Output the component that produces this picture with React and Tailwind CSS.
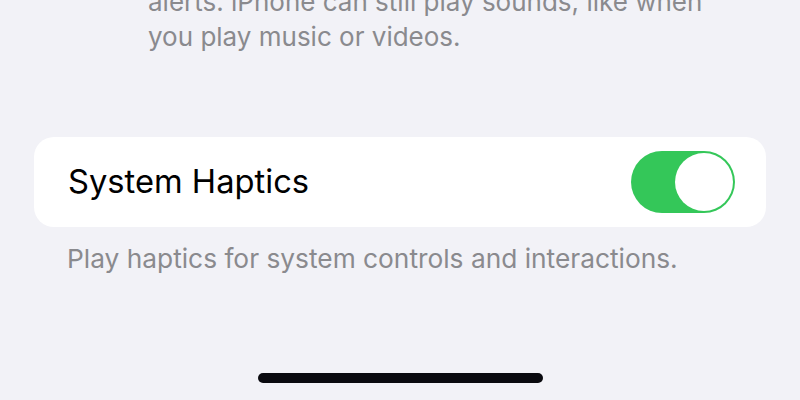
export default function App() {
  return (
    <div
      className="w-[800px] h-[400px] bg-[#f2f2f7] overflow-hidden flex flex-col"
      style={{ fontFamily: 'Inter, "Liberation Sans", sans-serif' }}
    >
      <div className="pl-[148px] mt-[-16px] text-[26px] leading-[35px] text-[#8a8a8e]">
        <div>alerts. iPhone can still play sounds, like when</div>
        <div>you play music or videos.</div>
      </div>
      <div className="mt-[83px] mx-[34px] h-[90px] bg-white rounded-[20px] flex items-center justify-between pl-[34px] pr-[31px]">
        <span className="text-[32.7px] text-black">System Haptics</span>
        <div className="w-[104px] h-[62px] rounded-full bg-[#34c759] flex items-center justify-end p-[2px]">
          <div className="w-[58px] h-[58px] rounded-full bg-white" />
        </div>
      </div>
      <div className="mt-[17px] pl-[67px] text-[26.3px] leading-[30px] text-[#8a8a8e]">
        Play haptics for system controls and interactions.
      </div>
      <div className="mt-auto mb-[17px] self-center w-[285px] h-[10px] rounded-full bg-[#0a0a0f]" />
    </div>
  );
}
